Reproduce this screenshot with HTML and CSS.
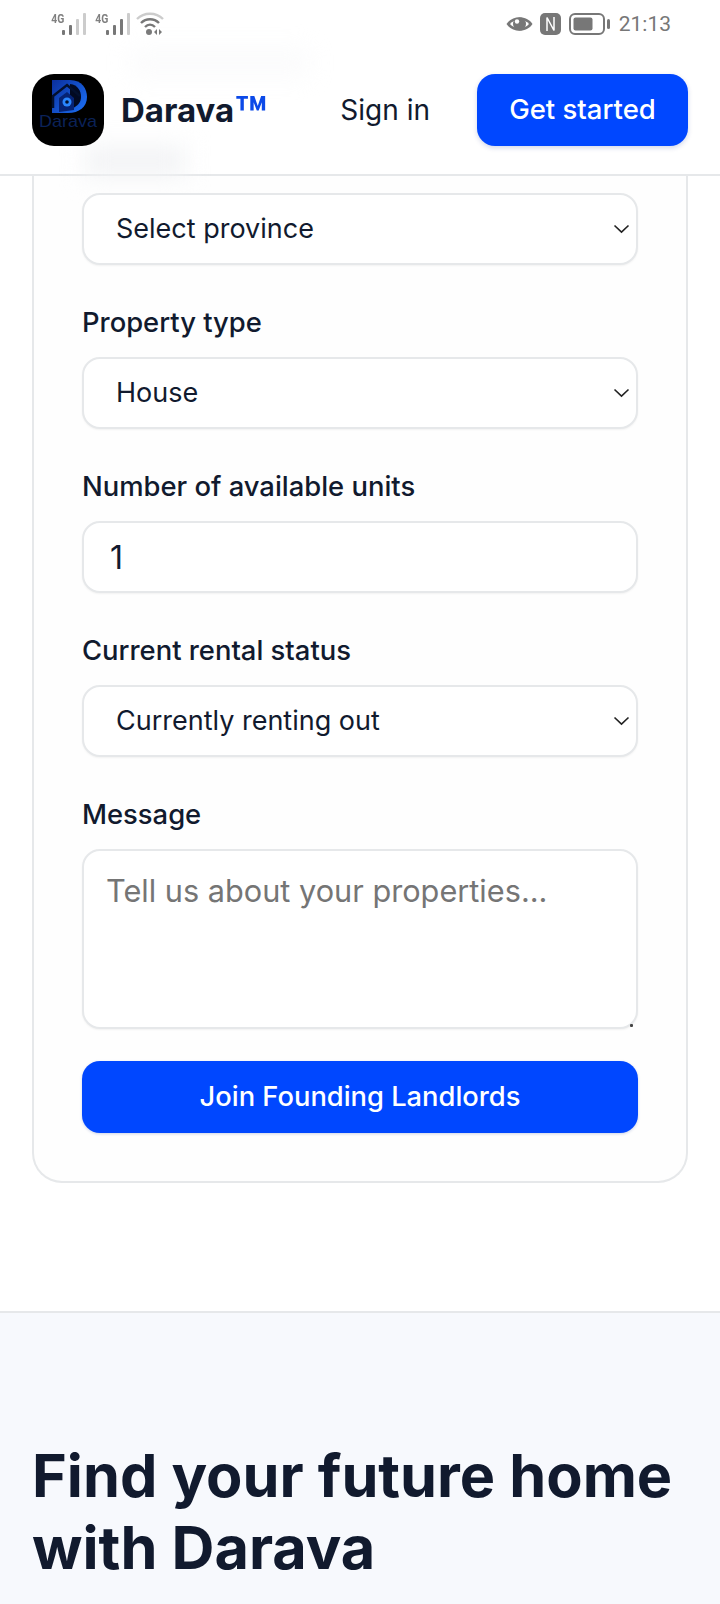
FILE: index.html
```html
<!DOCTYPE html>
<html lang="en">
<head>
<meta charset="utf-8">
<title>Darava</title>
<link rel="stylesheet" href="styles.css">
</head>
<body>
<div class="page">
  <header class="top">
    <div class="status">
      <div class="status-left">
        <span class="net">4G</span>
        <svg class="bars" width="24" height="22" viewBox="0 0 24 22"><rect x="0" y="17" width="3" height="5" rx="1" fill="#777"/><rect x="7" y="12" width="3" height="10" rx="1" fill="#777"/><rect x="14" y="6" width="3" height="16" rx="1" fill="#ccc"/><rect x="21" y="0" width="3" height="22" rx="1" fill="#ccc"/></svg>
        <span class="net net-second">4G</span>
        <svg class="bars" width="24" height="22" viewBox="0 0 24 22"><rect x="0" y="17" width="3" height="5" rx="1" fill="#777"/><rect x="7" y="12" width="3" height="10" rx="1" fill="#777"/><rect x="14" y="6" width="3" height="16" rx="1" fill="#777"/><rect x="21" y="0" width="3" height="22" rx="1" fill="#ccc"/></svg>
        <svg class="wifi" width="28" height="24" viewBox="0 0 28 24" fill="none"><path d="M1 7C8 0 20 0 27 7" stroke="#ccc" stroke-width="2.4"/><path d="M5 11C10 6 18 6 23 11" stroke="#777" stroke-width="2.4"/><path d="M9 15C12 12 16 12 19 15" stroke="#777" stroke-width="2.4"/><circle cx="13" cy="20" r="3" fill="#777"/><path d="M21 17v6l-3-3zM23 17v6l3-3z" fill="#777"/></svg>
      </div>
      <div class="status-right">
        <svg class="eye" width="27" height="18" viewBox="0 0 27 18"><path d="M0.500 9C6 0 21 0 26.500 9C21 18 6 18 0.500 9Z" fill="#777"/><path d="M4 9C8 3.500 19 3.500 23 9C19 14.500 8 14.500 4 9Z" fill="#fff"/><circle cx="13.500" cy="9" r="6.500" fill="#777"/><circle cx="11" cy="6.500" r="2.200" fill="#fff"/></svg>
        <svg width="21" height="22" viewBox="0 0 21 22"><rect width="21" height="22" rx="5" fill="#777"/><path d="M7 18V4.500L14 17.500V4" fill="none" stroke="#fff" stroke-width="1.500"/></svg>
        <svg width="41" height="22" viewBox="0 0 41 22"><rect x="1" y="1" width="34" height="20" rx="5" fill="none" stroke="#777" stroke-width="2"/><rect x="4.500" y="4.500" width="19" height="13" rx="2" fill="#777"/><rect x="38" y="6" width="3" height="10" rx="1.500" fill="#777"/></svg>
        <span class="clock">21:13</span>
      </div>
    </div>
    <nav class="nav">
      <div class="brand">
        <div class="logo">
          <svg width="72" height="72" viewBox="0 0 72 72">
            <defs><linearGradient id="lg" x1="0" y1="0" x2="1" y2="0.800"><stop offset="0" stop-color="#0b2f9c"/><stop offset="1" stop-color="#1b6cf0"/></linearGradient></defs>
            <path d="M20 6H38C50 6 55 15 55 23C55 33 47 39 36 39H20Z" fill="url(#lg)"/>
            <path d="M38 10C46 11 49 17 49 23C49 29 45 32 41 34L38 30Z" fill="#020a22"/>
            <path d="M21 34L21 22L35 11L48 22" fill="none" stroke="#03102e" stroke-width="2.500"/>
            <path d="M27 38L27 24L35 18L42 24L42 36" fill="#062374"/>
            <circle cx="35" cy="28" r="4.500" fill="#2a86ff"/><circle cx="35" cy="28" r="1.800" fill="#02102e"/>
            <text class="logo-word" x="36" y="53" text-anchor="middle" textLength="58" lengthAdjust="spacingAndGlyphs">Darava</text>
          </svg>
        </div>
        <span class="brand-name">Darava<span class="tm">™</span></span>
      </div>
      <a class="signin" href="#">Sign in</a>
      <a class="cta" href="#">Get started</a>
      <div class="smudge smudge-a"></div>
      <div class="smudge smudge-b"></div>
    </nav>
  </header>

  <main class="main">
    <form class="card">
      <div class="sel-wrap">
        <select class="field sel"><option>Select province</option></select>
        <svg class="chev" width="17" height="10" viewBox="0 0 17 10"><path d="M1.500 1.500L8.500 8.200L15.500 1.500" fill="none" stroke="#222" stroke-width="1.600"/></svg>
      </div>

      <label class="lbl">Property type</label>
      <div class="sel-wrap">
        <select class="field sel"><option>House</option></select>
        <svg class="chev" width="17" height="10" viewBox="0 0 17 10"><path d="M1.500 1.500L8.500 8.200L15.500 1.500" fill="none" stroke="#222" stroke-width="1.600"/></svg>
      </div>

      <label class="lbl">Number of available units</label>
      <input class="field inp" type="text" value="1">

      <label class="lbl">Current rental status</label>
      <div class="sel-wrap">
        <select class="field sel"><option>Currently renting out</option></select>
        <svg class="chev" width="17" height="10" viewBox="0 0 17 10"><path d="M1.500 1.500L8.500 8.200L15.500 1.500" fill="none" stroke="#222" stroke-width="1.600"/></svg>
      </div>

      <label class="lbl">Message</label>
      <div class="area-wrap">
        <textarea class="field area" placeholder="Tell us about your properties..."></textarea>
        <span class="grip"></span>
      </div>

      <button class="submit" type="button">Join Founding Landlords</button>
    </form>
  </main>

  <section class="hero">
    <h1 class="hero-title">Find your future home with Darava</h1>
  </section>
</div>
</body>
</html>
```
FILE: styles.css
```css
* { box-sizing: border-box; }
html, body { margin: 0; padding: 0; background: #fff; }
body { font-family: "Inter", "Liberation Sans", sans-serif; color: #111a2e; }
.page { width: 720px; height: 1604px; overflow: hidden; display: flex; flex-direction: column; }

.top { height: 176px; border-bottom: 2px solid #e6e8ea; background: #fff; flex: none; }
.status { height: 46px; padding: 12px 49px 0 50px; display: flex; justify-content: space-between; align-items: flex-start; }
.status-left, .status-right { display: flex; align-items: center; }
.status-right { gap: 8px; }
.net { font: 700 13px/14px "Roboto", sans-serif; color: #808080; align-self: flex-start; transform: scaleX(.8); width: 12px; margin-right: 0; display: block; text-align: center; white-space: nowrap; }
.net-second { margin-left: 8px; }
.wifi { margin-left: 6px; }
.eye { margin-right: -1px; }
.clock { font: 400 21px/24px "Roboto", sans-serif; color: #777; margin-left: 1px; }

.nav { position: relative; height: 128px; padding: 28px 32px 0; display: flex; align-items: flex-start; }
.brand { display: flex; align-items: center; gap: 17px; z-index: 1; }
.logo { width: 72px; height: 72px; border-radius: 22px; background: #000; overflow: hidden; display: block; }
.logo svg { display: block; }
.logo-word { font: 400 17px "Liberation Sans", sans-serif; fill: #0b2258; }
.brand-name { font-size: 33px; font-weight: 700; line-height: 72px; color: #111a2e; }
.tm { color: #0b49e8; font-size: 52px; line-height: 0; font-weight: 700; vertical-align: -12px; }
.signin { margin-left: auto; margin-right: 47px; font-size: 28px; line-height: 72px; color: #111a2e; text-decoration: none; z-index: 1; }
.cta { width: 211px; height: 72px; border-radius: 18px; background: #0047ff; color: #fff; font-size: 27.500px; font-weight: 500; line-height: 70px; text-align: center; text-decoration: none; box-shadow: 0 2px 5px rgba(0, 40, 140, .18); z-index: 1; }
.smudge { position: absolute; background: #f2f3f5; filter: blur(12px); }
.smudge-a { left: 130px; top: 2px; width: 180px; height: 30px; opacity: .3; }
.smudge-b { left: 85px; top: 100px; width: 100px; height: 30px; }

.main { flex: none; height: 1135px; padding: 0 32px; }
.card { width: 656px; height: 1007px; border: 2px solid #e6e8ea; border-top: 0; border-radius: 0 0 30px 30px; padding: 17px 48px 0; display: flex; flex-direction: column; background: #fefefe; }
.field { display: block; width: 556px; border: 2px solid #e6e8ea; border-radius: 18px; background: #fff; color: #111a2e; font: inherit; font-size: 27px; box-shadow: 0 1px 2px rgba(0, 0, 0, .05); outline: none; }
.sel-wrap, .area-wrap { position: relative; width: 556px; }
.sel { height: 72px; padding: 0 40px 2px 32px; appearance: none; -webkit-appearance: none; }
.chev { position: absolute; right: 8px; top: 31px; }
.inp { height: 72px; padding: 0 26px; font-size: 32px; }
.area { height: 180px; padding: 21px 22px; resize: none; font-size: 30.700px; line-height: 38px; }
.area::placeholder { color: #757575; opacity: 1; }
.grip { position: absolute; right: 5px; bottom: 2px; width: 3px; height: 3px; background: #444; border-radius: 1px; }
.lbl { font-size: 27.400px; line-height: 40px; font-weight: 450; margin: 37px 0 15px; color: #111a2e; }
.submit { margin-top: 32px; width: 556px; height: 72px; padding: 0 0 2px; border: 0; border-radius: 18px; background: #0047ff; color: #fff; font: inherit; font-size: 27.300px; font-weight: 500; box-shadow: 0 1px 3px rgba(0, 40, 140, .2); }

.hero { flex: 1; background: #f7f9fd; border-top: 2px solid #e6e8ea; padding: 126px 32px 0; }
.hero-title { margin: 0; font-size: 59.400px; line-height: 72px; font-weight: 700; color: #111a2e; }
```
